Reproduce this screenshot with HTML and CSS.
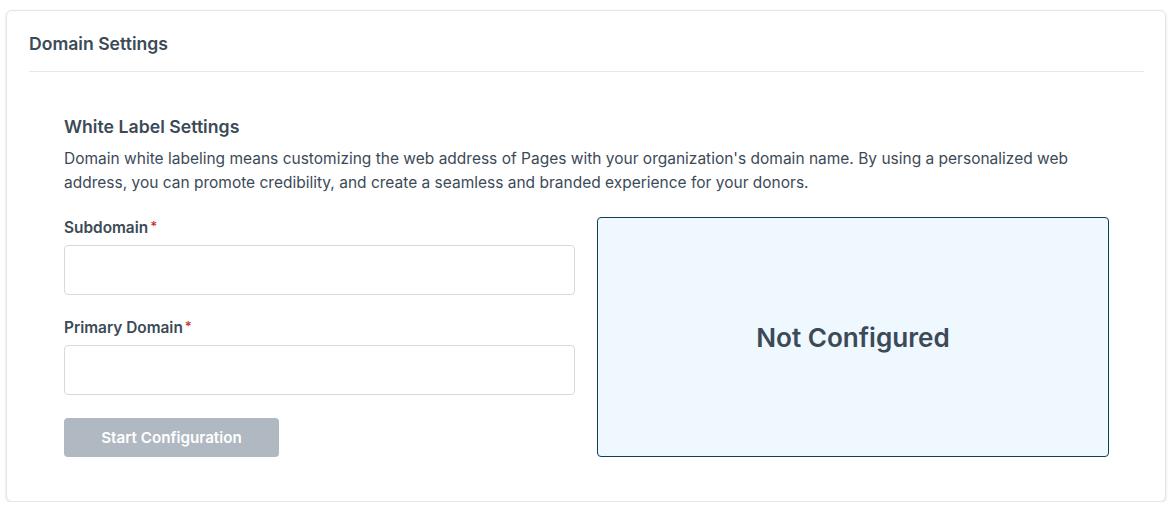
FILE: index.html
```html
<!DOCTYPE html>
<html lang="en">
<head>
<meta charset="utf-8">
<title>Domain Settings</title>
<link rel="stylesheet" href="styles.css">
</head>
<body>
<div class="card">
  <div class="card-header">
    <h2 class="card-title">Domain Settings</h2>
  </div>
  <div class="card-body">
    <h3 class="section-title">White Label Settings</h3>
    <p class="section-desc">Domain white labeling means customizing the web address of Pages with your organization's domain name. By using a personalized web address, you can promote credibility, and create a seamless and branded experience for your donors.</p>
    <div class="columns">
      <form class="form-col">
        <div class="field">
          <label class="field-label">Subdomain<span class="req">*</span></label>
          <input class="field-input" type="text">
        </div>
        <div class="field">
          <label class="field-label">Primary Domain<span class="req">*</span></label>
          <input class="field-input" type="text">
        </div>
        <button class="btn-start" type="button" disabled>Start Configuration</button>
      </form>
      <div class="status-box">
        <span class="status-text">Not Configured</span>
      </div>
    </div>
  </div>
</div>
</body>
</html>
```
FILE: styles.css
```css
* { box-sizing: border-box; }
html, body { margin: 0; padding: 0; background: #ffffff; }
body {
  font-family: Inter, "Noto Sans", "Liberation Sans", sans-serif;
  color: #3c4a57;
  padding: 10px 9px 0 6px;
}
.card {
  width: 1160px;
  border: 1px solid #e3e5e8;
  border-radius: 6px;
  background: #fff;
  box-shadow: 0 1px 3px rgba(0,0,0,0.12);
}
.card-header {
  margin: 0 21px 0 22px;
  padding: 21px 0 15px;
  border-bottom: 1px solid #e6e8eb;
}
.card-title {
  margin: 0;
  font-size: 17.6px;
  line-height: 24px;
  font-weight: 600;
  color: #3c4a57;
}
.card-body {
  padding: 43px 56px 44px 57px;
}
.section-title {
  margin: 0;
  font-size: 17.7px;
  line-height: 24px;
  font-weight: 600;
  color: #3c4a57;
}
.section-desc {
  margin: 8px 0 0;
  font-size: 15.5px;
  line-height: 24px;
  color: #3c4a57;
}
.columns {
  display: grid;
  grid-template-columns: 511px 512px;
  column-gap: 22px;
  margin-top: 22px;
}
.form-col {
  display: flex;
  flex-direction: column;
  margin: 0;
}
.field {
  display: flex;
  flex-direction: column;
  margin-bottom: 23px;
}
.field:first-child { padding-top: 1px; }
.field-label {
  font-size: 15.4px;
  line-height: 20px;
  font-weight: 600;
  color: #3c4a57;
  margin-bottom: 7px;
}
.req {
  color: #c8372d;
  margin-left: 2px;
  font-size: 13px;
  vertical-align: top;
  line-height: 17px;
}
.field-input {
  height: 50px;
  border: 1px solid #d6d9dd;
  border-radius: 4px;
  font: inherit;
  padding: 0 12px;
  background: #fff;
}
.btn-start {
  align-self: flex-start;
  width: 215px;
  height: 39px;
  border: none;
  border-radius: 4px;
  background: #b0b9c2;
  color: #ffffff;
  font-family: inherit;
  font-size: 15.2px;
  font-weight: 600;
  cursor: not-allowed;
}
.status-box {
  height: 240px;
  border: 1px solid #0e3f56;
  border-radius: 4px;
  background: #eef8fe;
  display: flex;
  align-items: center;
  justify-content: center;
}
.status-text {
  font-size: 26.1px;
  font-weight: 600;
  color: #3c4a57;
}
```
